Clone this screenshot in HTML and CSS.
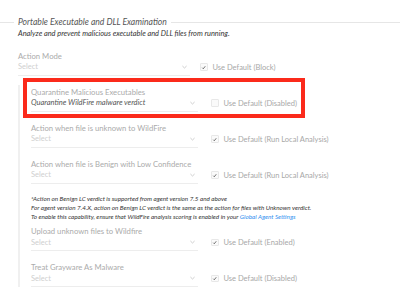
FILE: index.html
```html
<!DOCTYPE html>
<html>
<head>
<meta charset="utf-8">
<link rel="stylesheet" href="styles.css">
</head>
<body>
<div class="page">
  <div class="legend">
    <span class="rule short"></span>
    <span class="title">Portable Executable and DLL Examination</span>
    <span class="rule"></span>
  </div>
  <div class="content">
    <p class="desc">Analyze and prevent malicious executable and DLL files from running.</p>

    <div class="row top">
      <div class="label">Action Mode</div>
      <div class="select"><span class="ph">Select</span><svg class="chev" viewBox="0 0 6 4"><path d="M0.5 0.8 L3 3.2 L5.5 0.8" /></svg></div>
      <label class="check"><span class="box on"><svg viewBox="0 0 8 8"><path d="M1.8 4.3 L3.3 5.8 L6.2 2.2" /></svg></span>Use Default (Block)</label>
    </div>

    <div class="sub">
      <div class="row hl">
        <div class="label">Quarantine Malicious Executables</div>
        <div class="select"><span class="val">Quarantine WildFire malware verdict</span><svg class="chev" viewBox="0 0 6 4"><path d="M0.5 0.8 L3 3.2 L5.5 0.8" /></svg></div>
        <label class="check"><span class="box"></span>Use Default (Disabled)</label>
        <div class="highlight"></div>
      </div>

      <div class="row">
        <div class="label">Action when file is unknown to WildFire</div>
        <div class="select"><span class="ph">Select</span><svg class="chev" viewBox="0 0 6 4"><path d="M0.5 0.8 L3 3.2 L5.5 0.8" /></svg></div>
        <label class="check"><span class="box on"><svg viewBox="0 0 8 8"><path d="M1.8 4.3 L3.3 5.8 L6.2 2.2" /></svg></span>Use Default (Run Local Analysis)</label>
      </div>

      <div class="row">
        <div class="label">Action when file is Benign with Low Confidence</div>
        <div class="select"><span class="ph">Select</span><svg class="chev" viewBox="0 0 6 4"><path d="M0.5 0.8 L3 3.2 L5.5 0.8" /></svg></div>
        <label class="check"><span class="box on"><svg viewBox="0 0 8 8"><path d="M1.8 4.3 L3.3 5.8 L6.2 2.2" /></svg></span>Use Default (Run Local Analysis)</label>
      </div>

      <div class="note">
        <div>*Action on Benign LC verdict is supported from agent version 7.5 and above</div>
        <div>For agent version 7.4.X, action on Benign LC verdict is the same as the action for files with Unknown verdict.</div>
        <div>To enable this capability, ensure that WildFire analysis scoring is enabled in your <a class="link">Global Agent Settings</a></div>
      </div>

      <div class="row">
        <div class="label">Upload unknown files to Wildfire</div>
        <div class="select"><span class="ph">Select</span><svg class="chev" viewBox="0 0 6 4"><path d="M0.5 0.8 L3 3.2 L5.5 0.8" /></svg></div>
        <label class="check"><span class="box on"><svg viewBox="0 0 8 8"><path d="M1.8 4.3 L3.3 5.8 L6.2 2.2" /></svg></span>Use Default (Enabled)</label>
      </div>

      <div class="row">
        <div class="label">Treat Grayware As Malware</div>
        <div class="select"><span class="ph">Select</span><svg class="chev" viewBox="0 0 6 4"><path d="M0.5 0.8 L3 3.2 L5.5 0.8" /></svg></div>
        <label class="check"><span class="box on"><svg viewBox="0 0 8 8"><path d="M1.8 4.3 L3.3 5.8 L6.2 2.2" /></svg></span>Use Default (Disabled)</label>
      </div>
    </div>
  </div>
</div>
</body>
</html>
```

FILE: styles.css
```css
* { box-sizing: border-box; }
html, body { margin: 0; padding: 0; background: #fff; }
body {
  font-family: Lato, "Open Sans", sans-serif;
  width: 400px;
  height: 296px;
  overflow: hidden;
}
.page { padding-top: 16px; }

.legend {
  display: flex;
  align-items: center;
  gap: 4px;
  height: 12px;
}
.rule { flex: 1; height: 1px; background: #e6e6e6; }
.rule.short { flex: 0 0 14px; }
.title {
  font-style: italic;
  font-size: 8.6px;
  line-height: 12px;
  color: #555;
}

.content { padding-left: 18px; }
.desc {
  margin: 0 0 10.5px;
  font-style: italic;
  font-size: 7.4px;
  line-height: 12px;
  color: #333;
}

.row {
  position: relative;
  display: grid;
  grid-template-columns: 167px auto;
  grid-template-rows: 11px 14px;
  column-gap: 13px;
  margin-bottom: 11px;
}
.row.top { grid-template-columns: 172px auto; column-gap: 10px; margin-bottom: 9.5px; }

.label {
  grid-column: 1 / 3;
  font-size: 7.7px;
  line-height: 11px;
  color: #ababab;
  white-space: nowrap;
}
.select {
  grid-column: 1;
  grid-row: 2;
  display: flex;
  align-items: center;
  justify-content: space-between;
  height: 14px;
  padding: 0 3px 3px 0;
  border-bottom: 1px solid #ededed;
  font-size: 7.5px;
  line-height: 11px;
}
.ph { color: #cfcfcf; }
.val { color: #555; font-style: italic; }
.chev { width: 5px; height: 4px; fill: none; stroke: #b5b5b5; stroke-width: 0.8; }

.check {
  grid-column: 2;
  grid-row: 2;
  display: flex;
  align-items: center;
  gap: 5px;
  height: 14px;
  padding-bottom: 3px;
  font-size: 7.5px;
  line-height: 11px;
  color: #a8a8a8;
  white-space: nowrap;
}
.box {
  width: 7.5px;
  height: 7.5px;
  border: 1px solid #e8e8e8;
  background: #fafafa;
  border-radius: 1px;
  display: flex;
  align-items: center;
  justify-content: center;
}
.box svg { width: 7px; height: 7px; fill: none; stroke: #333; stroke-width: 1; }

.sub {
  border-left: 2px solid #f0f0f0;
  padding: 1.5px 0 0 11px;
  margin-left: 0;
}

.highlight {
  position: absolute;
  left: -8.5px;
  top: -8.5px;
  width: 282.5px;
  height: 40px;
  border: 4px solid #fb2a1b;
}

.note {
  margin: -1px 0 5.7px;
  font-style: italic;
  font-size: 6.3px;
  line-height: 9px;
  color: #333;
  white-space: nowrap;
}
.link { color: #2f8fef; text-decoration: none; }
```
